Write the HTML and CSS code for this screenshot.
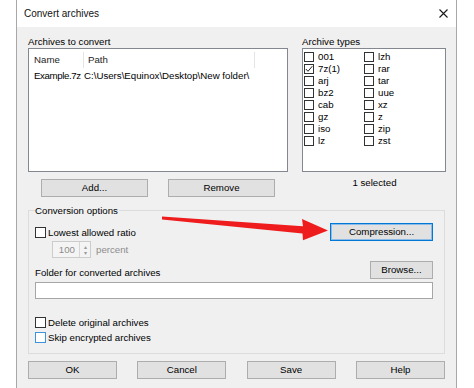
FILE: index.html
```html
<!DOCTYPE html>
<html>
<head>
<meta charset="utf-8">
<title>Convert archives</title>
<link rel="stylesheet" href="styles.css">
</head>
<body>
<div class="dialog">
  <div class="titlebar">
    <span class="title">Convert archives</span>
    <svg class="close" width="9" height="9" viewBox="0 0 9 9"><path d="M0.5 0.5 L8.5 8.5 M8.5 0.5 L0.5 8.5" stroke="#1a1a1a" stroke-width="1.1" fill="none"/></svg>
  </div>
  <div class="content">
    <div class="top">
      <div class="left-col">
        <div class="label">Archives to convert</div>
        <div class="listbox">
          <div class="list-head">
            <div class="col c-name">Name</div>
            <div class="col c-path">Path</div>
          </div>
          <div class="list-row">
            <div class="cell r-name">Example.7z</div>
            <div class="cell r-path">C:\Users\Equinox\Desktop\New folder\</div>
          </div>
        </div>
        <div class="btn-row">
          <button class="btn btn-wide">Add...</button>
          <button class="btn btn-wide">Remove</button>
        </div>
      </div>
      <div class="right-col">
        <div class="label">Archive types</div>
        <div class="typebox">
          <div class="types">
            <div class="type"><span class="box"></span>001</div>
            <div class="type"><span class="box"></span>lzh</div>
            <div class="type"><span class="box"><svg width="8" height="8" viewBox="0 0 8 8"><path d="M0.8 4 L3 6.3 L7.3 1.2" stroke="#222" stroke-width="1" fill="none"/></svg></span>7z(1)</div>
            <div class="type"><span class="box"></span>rar</div>
            <div class="type"><span class="box"></span>arj</div>
            <div class="type"><span class="box"></span>tar</div>
            <div class="type"><span class="box"></span>bz2</div>
            <div class="type"><span class="box"></span>uue</div>
            <div class="type"><span class="box"></span>cab</div>
            <div class="type"><span class="box"></span>xz</div>
            <div class="type"><span class="box"></span>gz</div>
            <div class="type"><span class="box"></span>z</div>
            <div class="type"><span class="box"></span>iso</div>
            <div class="type"><span class="box"></span>zip</div>
            <div class="type"><span class="box"></span>lz</div>
            <div class="type"><span class="box"></span>zst</div>
          </div>
        </div>
        <div class="selected">1 selected</div>
      </div>
    </div>

    <div class="group">
      <div class="group-title">Conversion options</div>
      <div class="row1">
        <div class="check"><span class="cbox"></span>Lowest allowed ratio</div>
        <button class="btn btn-compress">Compression...</button>
      </div>
      <div class="row2">
        <div class="spin"><span class="spin-val">100</span><span class="spin-btns"><span class="sb">&#9652;</span><span class="sb">&#9662;</span></span></div>
        <span class="percent">percent</span>
      </div>
      <div class="row3">
        <span class="flabel">Folder for converted archives</span>
        <button class="btn btn-browse">Browse...</button>
      </div>
      <div class="folder-input"></div>
      <div class="check check-row first"><span class="cbox"></span>Delete original archives</div>
      <div class="check check-row"><span class="cbox cbox-hover"></span>Skip encrypted archives</div>
    </div>

    <div class="footer">
      <button class="btn btn-foot">OK</button>
      <button class="btn btn-foot">Cancel</button>
      <button class="btn btn-foot">Save</button>
      <button class="btn btn-foot">Help</button>
    </div>
  </div>
</div>
<svg class="arrow" width="474" height="388" viewBox="0 0 474 388">
  <polygon points="162,216.6 303,226.2 302,219 328,230.6 303,240.2 302.5,233.6 162,219.6" fill="#ee1c1c"/>
</svg>
</body>
</html>
```

FILE: styles.css
```css
* { box-sizing: border-box; }
html, body {
  margin: 0;
  padding: 0;
  background: #ffffff;
  height: 388px;
  overflow: hidden;
}
body {
  font-family: "Liberation Sans", Arial, sans-serif;
  font-size: 9.7px;
  color: #000;
  position: relative;
}
.dialog {
  margin-left: 16px;
  width: 441px;
  height: 388px;
  border-left: 1px solid #a8a8a8;
  border-right: 1px solid #a8a8a8;
  display: flex;
  flex-direction: column;
}
.titlebar {
  height: 27px;
  flex: 0 0 27px;
  background: #fff;
  display: flex;
  align-items: center;
  justify-content: space-between;
  padding: 0 8px 0 7px;
}
.title { font-size: 10px; color: #111; }
.close { display: block; }
.content {
  flex: 1;
  background: #f0f0f0;
  padding: 8px 10px 0 11px;
}
.top {
  display: flex;
  gap: 14px;
}
.left-col { width: 260px; }
.right-col { width: 144px; }
.label { line-height: 13px; height: 13px; }
.listbox {
  height: 124px;
  border: 1px solid #828790;
  background: #fff;
}
.list-head {
  display: flex;
  height: 20px;
  padding-top: 3px;
}
.col {
  height: 16px;
  line-height: 16px;
  color: #1e1e1e;
  border-right: 1px solid #e5e5e5;
}
.c-name { width: 55px; padding-left: 5px; }
.c-path { width: 171px; padding-left: 4px; }
.list-row {
  display: flex;
  height: 14px;
  line-height: 14px;
}
.cell { white-space: nowrap; }
.r-name { width: 55px; padding-left: 5px; overflow: hidden; letter-spacing: -0.4px; }
.r-path { padding-left: 0; }

.btn {
  font-family: inherit;
  font-size: 9.7px;
  color: #000;
  background: #e1e1e1;
  border: 1px solid #adadad;
  padding: 0;
  margin: 0;
  height: 18px;
  line-height: 16px;
  text-align: center;
}
.btn-row {
  display: flex;
  gap: 20px;
  margin-top: 7px;
  padding-left: 13px;
}
.btn-wide { width: 107px; }

.typebox {
  height: 124px;
  border: 1px solid #828790;
  background: #fff;
  padding: 2px 0 0 1px;
}
.types {
  display: grid;
  grid-template-columns: 60px 1fr;
  grid-auto-rows: 12px;
}
.type {
  display: flex;
  align-items: center;
  gap: 4px;
  line-height: 12px;
}
.box {
  width: 10px;
  height: 10px;
  border: 1px solid #333;
  background: #fff;
  display: flex;
  align-items: center;
  justify-content: center;
  flex: 0 0 10px;
}
.box svg { display: block; }
.selected {
  margin-top: 4px;
  line-height: 14px;
  text-align: center;
  padding-left: 1px;
}

.group {
  margin-top: 13px;
  width: 417px;
  border: 1px solid #dcdcdc;
  padding: 0 11px 8px 6px;
}
.group-title {
  margin-top: -7px;
  width: fit-content;
  line-height: 13px;
  height: 13px;
  background: #f0f0f0;
  padding: 0 1px 0 0;
}
.row1 {
  margin-top: 6px;
  height: 18px;
  display: flex;
  justify-content: space-between;
  align-items: center;
}
.check {
  display: flex;
  align-items: center;
  gap: 2px;
}
.cbox {
  width: 11px;
  height: 11px;
  border: 1px solid #333;
  background: #fff;
  flex: 0 0 11px;
}
.cbox-hover { border-color: #3d94dc; }
.btn-compress {
  width: 103px;
  border: 1px solid #0078d7;
  box-shadow: inset 0 0 0 1px #8cbbe8;
}
.row2 {
  height: 17px;
  display: flex;
  align-items: center;
  padding-left: 17px;
  gap: 5px;
}
.spin {
  width: 39px;
  height: 17px;
  border: 1px solid #cccccc;
  background: #f4f4f4;
  display: flex;
}
.spin-val {
  flex: 1;
  text-align: right;
  padding-right: 4px;
  line-height: 15px;
  color: #8d8d8d;
}
.spin-btns {
  width: 11px;
  border-left: 1px solid #d6d6d6;
  display: flex;
  flex-direction: column;
  align-items: center;
  justify-content: center;
  font-size: 6px;
  line-height: 6px;
  color: #9a9a9a;
}
.percent { color: #8d8d8d; }
.row3 {
  margin-top: 3px;
  height: 18px;
  display: flex;
  justify-content: space-between;
  align-items: flex-end;
}
.flabel { line-height: 13px; }
.btn-browse { width: 63px; }
.folder-input {
  margin-top: 3px;
  height: 17px;
  border: 1px solid #a6a6a6;
  background: #fff;
}
.check-row {
  height: 15px;
}
.check-row.first { margin-top: 16px; }

.footer {
  margin-top: 7px;
  width: 417px;
  display: flex;
  justify-content: space-between;
}
.btn-foot { width: 89px; }

.arrow {
  position: absolute;
  left: 0;
  top: 0;
  pointer-events: none;
}
```
